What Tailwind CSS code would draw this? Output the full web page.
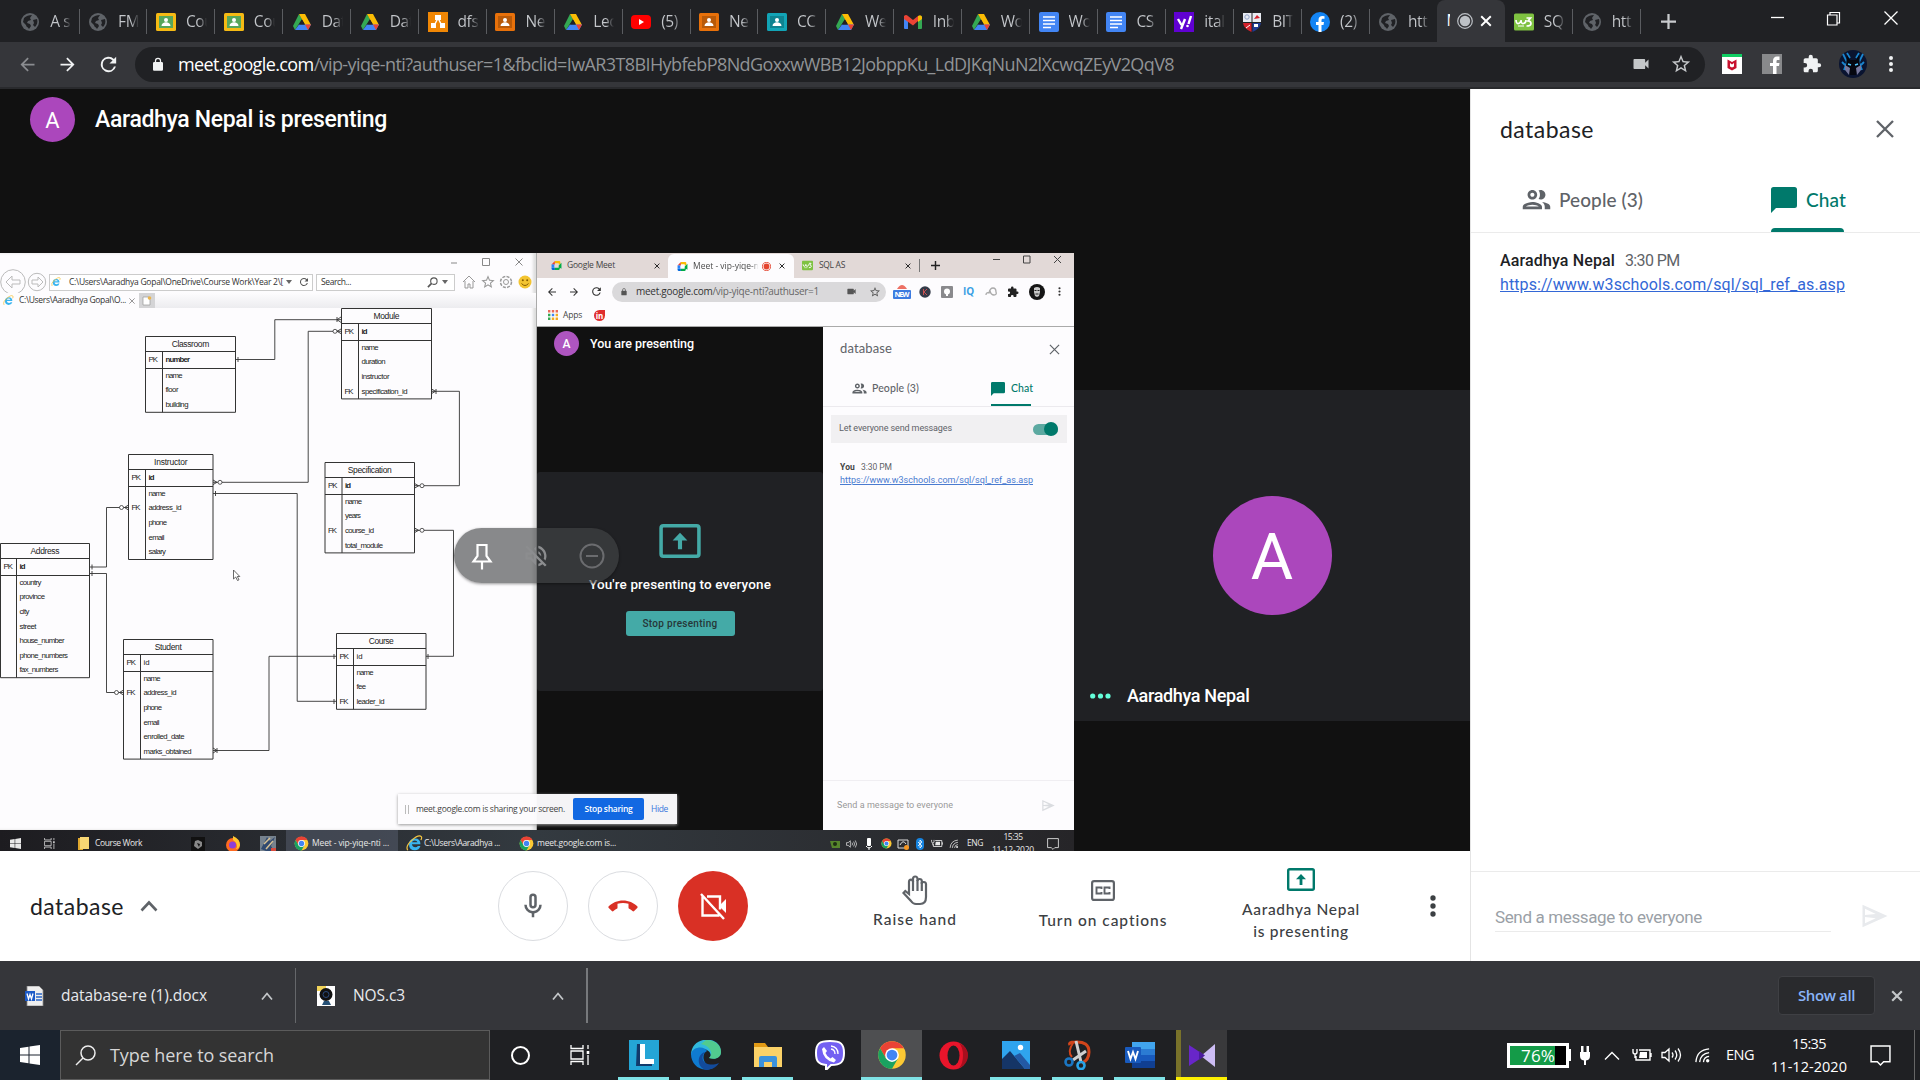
<!DOCTYPE html>
<html lang="en">
<head>
<meta charset="utf-8">
<title>Meet - vip-yiqe-nti</title>
<script src="https://cdn.jsdelivr.net/npm/@tailwindcss/browser@4"></script>
</head>
<body class="w-[1920px] h-[1080px] overflow-hidden bg-[#111] font-['Open_Sans',sans-serif] whitespace-nowrap flex flex-col">

<svg class="hidden">
  <symbol id="globe" viewBox="0 0 20 20"><circle cx="10" cy="10" r="9" fill="#5f6368"/><path d="M4 6c2-2 5-3 8-3l-2 3 1 2-3 1-1 2 3 1 1 2-2 3c-1-2-3-2-3-4L3 10zM13 8l4-1c1 3 0 6-2 8l-2-2 1-2z" fill="#202124"/></symbol>
  <symbol id="drive" viewBox="0 0 20 20"><path d="M7 2l3 5-7 11-2-4z" fill="#34a853"/><path d="M7 2h6l6 11h-6z" fill="#fbbc04"/><path d="M7 12.500H19l-3 5.500H3z" fill="#4285f4"/><path d="M13 12.500h6L16 18z" fill="#ea4335"/><path d="M10 7.500l3 5H7.200z" fill="#202124"/></symbol>
  <symbol id="classroom" viewBox="0 0 20 20"><rect y="1" width="20" height="18" rx="1.500" fill="currentColor"/><rect x="3" y="4" width="14" height="12" fill="#000" fill-opacity=".2"/><circle cx="10" cy="8" r="2" fill="#fff"/><path d="M5.500 14c0-5 9-5 9 0z" fill="#fff"/></symbol>
  <symbol id="classgreen" viewBox="0 0 20 20"><rect y="1" width="20" height="18" rx="1.500" fill="#f5ba14"/><rect x="3" y="4" width="14" height="12" fill="#57a65b"/><circle cx="10" cy="8" r="2" fill="#fff"/><path d="M5.500 14c0-5 9-5 9 0z" fill="#fff"/></symbol>
  <symbol id="flow" viewBox="0 0 20 20"><rect width="20" height="20" fill="#f08705"/><path d="M10 6L6 14M10 6l4 8" stroke="#fff" stroke-width="1.500"/><path d="M7 3h6v5H7zM3 11h5v5H3zM12 11h5v5h-5z" fill="#fff"/></symbol>
  <symbol id="yt" viewBox="0 0 20 20"><rect y="3" width="20" height="14" rx="4" fill="#f00"/><path d="M8 7l5 3-5 3z" fill="#fff"/></symbol>
  <symbol id="gmail" viewBox="0 0 20 20"><path d="M1 4h4v13H2q-1 0-1-1z" fill="#4285f4"/><path d="M15 4h4v12q0 1-1 1h-3z" fill="#34a853"/><path d="M1 4q2-2 4 0l5 4 5-4v5l-5 4.500L1 7z" fill="#ea4335"/><path d="M15 4q3-2 4 1v2l-4 3z" fill="#fbbc04"/></symbol>
  <symbol id="docs" viewBox="0 0 20 20"><rect width="20" height="20" rx="2" fill="#4285f4"/><path d="M4 5h12M4 8.500h12M4 12h12M4 15.500h8" stroke="#fff" stroke-width="1.700"/></symbol>
  <symbol id="yahoo" viewBox="0 0 20 20"><rect width="20" height="20" fill="#6001d2"/><path d="M4 7l3.500 6M11 7L7 17M14.500 12L17 4" stroke="#fff" stroke-width="2.400"/><circle cx="13.500" cy="14" r="1.300" fill="#fff"/></symbol>
  <symbol id="shield" viewBox="0 0 20 20"><path d="M1 1h8.500v9H1z" fill="#e8ebf2"/><path d="M10.500 1H19v9h-8.500z" fill="#e8ebf2"/><path d="M1 11h8.500v9Q2 17 1 11z" fill="#d4202a"/><path d="M10.500 11H19q-1 6-8.500 9z" fill="#1f3a93"/><circle cx="5" cy="5" r="2.200" fill="none" stroke="#8fa0c8"/><path d="M12 7l3-4 3 3z" fill="#d4202a"/><path d="M4 16l4-3" stroke="#fff"/><path d="M12 12h4v3h-4z" fill="#fff"/></symbol>
  <symbol id="fb" viewBox="0 0 20 20"><circle cx="10" cy="10" r="10" fill="#1384f4"/><path d="M8.500 20v-7H6v-3h2.500V8c0-2.700 1.500-4 4-4l2 .2v2.500H13c-1.200 0-1.500.6-1.500 1.500V10H14l-.5 3h-2v7z" fill="#fff"/></symbol>
  <symbol id="w3" viewBox="0 0 20 20"><rect y="1.500" width="20" height="17" rx="1.500" fill="#7fc241"/><path d="M2 8q.3 4 2.500 3.500T7 8q0 4 2.500 3.500T12 8" fill="none" stroke="#fff" stroke-width="1.700"/><path d="M12.500 6h4l-2.500 3q3 0 3 2.500T12.500 14" fill="none" stroke="#fff" stroke-width="1.700"/><path d="M4 14h6" stroke="#fff"/></symbol>
  <symbol id="chrome" viewBox="0 0 24 24"><circle cx="12" cy="12" r="11" fill="#fcc934"/><path d="M12 6.500h9.530a11 11 0 0 0-19.060 0l4.770 8.250z" fill="#ea4335"/><path d="M2.470 6.500A11 11 0 0 0 12 23l4.760-8.250H7.240z" fill="#1aa260"/><circle cx="12" cy="12" r="5.500" fill="#fff"/><circle cx="12" cy="12" r="4.300" fill="#4285f4"/></symbol>
  <symbol id="meet" viewBox="0 0 20 20"><path d="M1 8l6-6v6z" fill="#ea4335"/><path d="M7 2h8q2 0 2 2v4h-3V6H7z" fill="#fbbc04"/><path d="M1 8h5v6H1z" fill="#2684fc"/><path d="M1 14h6v4H3q-2 0-2-2z" fill="#0066da"/><path d="M7 14h7v-4l5-5v11l-3-2v2q0 2-2 2H7z" fill="#00ac47"/></symbol>
  <symbol id="ie" viewBox="0 0 20 20"><path d="M17 11H7q.5 3.500 4 3.500 2 0 3-1.500h3q-1.500 5-6.500 5-7 0-7-7.500Q4 4 10.500 4 17 4 17 11zM7 8.500h6.500Q13 6.500 10.300 6.500T7 8.500z" fill="#39b4ef"/><path d="M2 18Q-1 13 7 6T18 2q1 1-.5 4" fill="none" stroke="#f4c542" stroke-width="1.400"/></symbol>
  <symbol id="puzzle" viewBox="0 0 24 24"><path d="M20.500 11H19V7a2 2 0 0 0-2-2h-4V3.500a2.500 2.500 0 0 0-5 0V5H4a2 2 0 0 0-2 2v3.800h1.500a2.700 2.700 0 0 1 0 5.400H2V20c0 1.100.9 2 2 2h3.800v-1.500a2.700 2.700 0 0 1 5.400 0V22H17a2 2 0 0 0 2-2v-4h1.500a2.500 2.500 0 0 0 0-5z" fill="currentColor"/></symbol>
  <symbol id="people" viewBox="0 0 24 24"><path fill="currentColor" d="M9 13.750c-2.340 0-7 1.170-7 3.500V19h14v-1.750c0-2.330-4.660-3.500-7-3.500zM4.340 17c.84-.58 2.870-1.250 4.660-1.250s3.820.67 4.660 1.250H4.340zM9 12c1.930 0 3.500-1.570 3.500-3.500S10.930 5 9 5 5.500 6.570 5.500 8.500 7.070 12 9 12zm0-5c.83 0 1.500.67 1.500 1.500S9.830 10 9 10s-1.500-.67-1.500-1.500S8.170 7 9 7zm7.040 6.810c1.160.84 1.960 1.960 1.960 3.440V19h4v-1.750c0-2.020-3.500-3.170-5.960-3.440zM15 12c1.930 0 3.500-1.570 3.500-3.500S16.930 5 15 5c-.54 0-1.040.13-1.500.35.630.89 1 1.980 1 3.150s-.37 2.260-1 3.150c.46.22.96.35 1.500.35z"/></symbol>
  <symbol id="chat" viewBox="0 0 26 26"><path d="M2.500 0h21Q26 0 26 2.500v16Q26 21 23.500 21H5l-5 5V2.500Q0 0 2.500 0z" fill="currentColor"/></symbol>
  <symbol id="x" viewBox="0 0 20 20"><path d="M2 2l16 16M18 2L2 18" fill="none" stroke="currentColor" stroke-width="3.200"/></symbol>
  <symbol id="cam" viewBox="0 0 24 24"><path fill="currentColor" d="M17 10.500V7a1 1 0 0 0-1-1H4a1 1 0 0 0-1 1v10c0 .55.450 1 1 1h12a1 1 0 0 0 1-1v-3.500l4 4v-11z"/></symbol>
  <symbol id="star" viewBox="0 0 24 24"><path fill="currentColor" d="M22 9.240l-7.190-.62L12 2 9.190 8.630 2 9.240l5.460 4.730L5.820 21 12 17.270 18.180 21l-1.630-7.030zM12 15.400l-3.760 2.270 1-4.280-3.320-2.880 4.380-.38L12 6.100l1.710 4.040 4.380.38-3.320 2.880 1 4.280z"/></symbol>
  <symbol id="lock" viewBox="0 0 24 24"><path fill="currentColor" d="M18 8h-1V6A5 5 0 0 0 7 6v2H6a2 2 0 0 0-2 2v10c0 1.100.9 2 2 2h12a2 2 0 0 0 2-2V10a2 2 0 0 0-2-2zM9 8V6a3 3 0 0 1 6 0v2z"/></symbol>
  <symbol id="back" viewBox="0 0 24 24"><path fill="currentColor" d="M20 11H7.830l5.590-5.590L12 4l-8 8 8 8 1.410-1.410L7.830 13H20z"/></symbol>
  <symbol id="fwd" viewBox="0 0 24 24"><path fill="currentColor" d="M12 4l-1.410 1.410L16.170 11H4v2h12.170l-5.580 5.590L12 20l8-8z"/></symbol>
  <symbol id="reload" viewBox="0 0 24 24"><path fill="currentColor" d="M17.650 6.350A8 8 0 1 0 19.730 14h-2.080A6 6 0 1 1 12 6c1.660 0 3.140.69 4.220 1.780L13 11h7V4z"/></symbol>
  <symbol id="dots" viewBox="0 0 24 24"><path fill="currentColor" d="M12 8a2 2 0 1 0 0-4 2 2 0 0 0 0 4zm0 2a2 2 0 1 0 0 4 2 2 0 0 0 0-4zm0 6a2 2 0 1 0 0 4 2 2 0 0 0 0-4z"/></symbol>
  <symbol id="present" viewBox="0 0 28 23"><rect x="1.200" y="1.200" width="25.600" height="20.600" rx="1.500" fill="none" stroke="currentColor" stroke-width="2.400"/><path d="M14 6l5 5.200h-3.600V17h-2.800v-5.800H9z" fill="currentColor"/></symbol>
  <symbol id="send" viewBox="0 0 24 24"><path fill="currentColor" d="M2 3v18l20-9zm2 3.110L12.600 10.300 4 11.200zM4 12.800l8.600.9L4 17.890z"/></symbol>
  <symbol id="win" viewBox="0 0 20 20"><path fill="currentColor" d="M0 3l8.500-1.200v7.700H0zM9.500 1.600L20 0v9.500H9.500zM0 10.500h8.500v7.700L0 17zM9.500 10.500H20V20L9.500 18.400z"/></symbol>
  <symbol id="taskview" viewBox="0 0 20 20"><path d="M1 0v3.500h12V0M1 20v-3.500h12V20M1 6h12v8H1zM18 0v4M18 10v10" fill="none" stroke="currentColor" stroke-width="1.300"/><path d="M16.700 6h2.600v3h-2.600z" fill="currentColor"/></symbol>
  <symbol id="speaker" viewBox="0 0 22 18"><path d="M1 6.500h3L8 3v12l-4-3.500H1zM11 6.500q2 2.500 0 5M14 4.500q3.500 4.500 0 9M17 2.500q5 6.500 0 13" fill="none" stroke="currentColor" stroke-width="1.300"/></symbol>
  <symbol id="wifi" viewBox="0 0 18 18"><path d="M2 16Q3 3 16 2M6 16q1-9 10-10M10 16q.5-5.500 6-6" fill="none" stroke="currentColor" stroke-width="1.400"/><circle cx="14.500" cy="14.500" r="1.800" fill="currentColor"/></symbol>
  <symbol id="batt" viewBox="0 0 20 14"><path d="M7 2h11v10H4V8M19 5v4M1 1v3q0 2 2 2t2-2V1M3 6v4" fill="none" stroke="currentColor" stroke-width="1.400"/><path d="M8 4h7v6H7z" fill="currentColor"/></symbol>
  <symbol id="note" viewBox="0 0 20 20"><path d="M1 1h18v15h-6l-3 3-3-3H1z" fill="none" stroke="currentColor" stroke-width="1.400"/></symbol>
</svg>

<!-- Tab strip -->
<header class="h-[42px] shrink-0 bg-[#202124] flex text-[15.500px] text-[#c4c7cb]">
  <div id="tabs" class="flex pl-[11.700px] w-[1641.500px] shrink-0"></div>
  <svg class="w-[15px] h-[15px] mt-[14px] ml-[19px] text-[#c8cacd]" viewBox="0 0 16 16"><path d="M8 0v16M0 8h16" stroke="currentColor" stroke-width="2.400"/></svg>
  <div class="ml-[94px] flex pt-[11px] text-white">
    <svg class="w-[16px] h-[14px]" viewBox="0 0 16 14"><path d="M1 6.500h13" stroke="currentColor" stroke-width="1.300"/></svg>
    <svg class="w-[15px] h-[15px] ml-[40px]" viewBox="0 0 15 15"><path d="M1.500 4h9.500v10H1.500zM4 4V1.500h9.500V12H11" fill="none" stroke="currentColor" stroke-width="1.200"/></svg>
    <svg class="w-[14px] h-[14px] ml-[43px]" viewBox="0 0 14 14"><path d="M.5.5l13 13M13.500.5l-13 13" stroke="currentColor" stroke-width="1.300"/></svg>
  </div>
</header>

<!-- Toolbar -->
<div class="h-[47px] shrink-0 bg-[#35363a] border-b-2 border-[#292a2d] flex items-center text-[#f1f3f4] pb-px">
  <svg class="size-[21px] ml-[17px] text-[#8a8c90] shrink-0"><use href="#back"/></svg>
  <svg class="size-[21px] ml-[19px] shrink-0"><use href="#fwd"/></svg>
  <svg class="size-[23px] ml-[19px] mr-[15px] shrink-0"><use href="#reload"/></svg>
  <div class="w-[1570px] h-[35px] rounded-full bg-[#202124] flex items-center shrink-0">
    <svg class="w-[16px] h-[15px] ml-[15px] mr-[12px] shrink-0"><use href="#lock"/></svg>
    <span class="w-[1454px] text-[18px] text-[#909396] shrink-0"><span data-w="996"><span class="text-white">meet.google.com</span>/vip-yiqe-nti?authuser=1&amp;fbclid=IwAR3T8BIHybfebP8NdGoxxwWBB12JobppKu_LdDJKqNuN2lXcwqZEyV2QqV8</span></span>
    <svg class="size-[20px] ml-[-1px] text-[#c4c7c9] shrink-0"><use href="#cam"/></svg>
    <svg class="size-[22px] ml-[19px] text-[#c4c7c9] shrink-0"><use href="#star"/></svg>
  </div>
  <svg class="size-[20px] ml-[17px] shrink-0" viewBox="0 0 20 20"><path fill="#fff" d="M0 0h20v20H0z"/><path fill="#0fce62" d="M0 0h20v3H0z"/><path d="M5.500 5.500L10 8l4.500-2.500V14L10 16.500 5.500 14z" fill="#c8102e"/><path d="M8 9l2 1.500L12 9v3.500l-2 1-2-1z" fill="#fff"/></svg>
  <svg class="size-[20px] ml-[20px] shrink-0" viewBox="0 0 20 20"><path fill="#88898b" d="M0 0h20v20H0z"/><path d="M11 20v-8H8V9h3V7c0-3 1.500-4.500 4-4.500h2.500V6H16c-1.500 0-1.500.5-1.500 1.500V9h3l-.5 3h-2.500v8z" fill="#fff"/></svg>
  <svg class="size-[20px] ml-[20px] shrink-0"><use href="#puzzle"/></svg>
  <svg class="size-[28px] ml-[17px] shrink-0" viewBox="0 0 28 28"><circle cx="14" cy="14" r="14" fill="#0a1430"/><path d="M4 4l4 8-3 8M24 4l-4 8 3 8M8 3l3 5M20 3l-3 5M3 12l3 3M25 12l-3 3" stroke="#1a86d0" stroke-width="1.800" fill="none"/><path d="M8 5l3 5h6l3-5 1 11-4 9h-6L7 16z" fill="#05070f"/><path d="M6 15l5 3-1 7-4-5zM22 15l-5 3 1 7 4-5z" fill="#77789c"/><path d="M9 14l3 1M19 14l-3 1" stroke="#4cc6ff" stroke-width="1.500"/></svg>
  <svg class="size-[24px] ml-[12px] shrink-0"><use href="#dots"/></svg>
</div>

<!-- Page -->
<div class="h-[872px] shrink-0 flex">
  <main class="w-[1470px] shrink-0 flex flex-col font-[Roboto,sans-serif] bg-[#111]">
    <div class="h-[164px] shrink-0 flex pl-[30px] pt-[8px] text-white">
      <div class="size-[45px] rounded-full bg-[#ab47bc] flex items-center justify-center text-[22px] pt-[2px]">A</div>
      <span class="ml-[20px] mt-[7px] text-[23px] leading-[32px] font-medium"><span data-w="292">Aaradhya Nepal is presenting</span></span>
    </div>
    <div class="h-[598px] shrink-0 flex">
      <!-- Shared screen -->
      <section class="relative w-[1074px] h-[598px] shrink-0 flex flex-col overflow-hidden bg-[#fdfcfe]">
        <div class="h-[577px] shrink-0 flex">
          <!-- Browser window with the ER diagram -->
          <div class="w-[537px] shrink-0 border-r border-[#aaa] font-['Open_Sans',sans-serif] text-[8.500px] text-[#333] flex flex-col shadow-[inset_-3px_0_3px_#ddd]">
            <div class="h-[18px] flex items-center pl-[451px] text-[#888]">
              <svg class="w-[6px] h-[8px]" viewBox="0 0 6 8"><path d="M0 5h6" stroke="currentColor"/></svg>
              <svg class="size-[8px] ml-[25px]" viewBox="0 0 8 8"><path d="M.5.5h7v7h-7z" fill="none" stroke="currentColor"/></svg>
              <svg class="size-[8px] ml-[25px]" viewBox="0 0 8 8"><path d="M.5.5l7 7M7.500.5l-7 7" stroke="currentColor" fill="none"/></svg>
            </div>
            <div class="h-[22px] flex items-center text-[#999]">
              <svg class="w-[49px] h-[26px] shrink-0" viewBox="0 0 49 26"><g fill="none" stroke="#bbb"><circle cx="13" cy="13" r="12.300"/><circle cx="37" cy="13" r="8.700"/><path d="M6 13l6-6v4h8v4h-8v4zM43 13l-5-5v3h-6v4h6v3z"/></g></svg>
              <div class="w-[264px] h-[17px] border border-[#ccc] bg-white flex items-center shrink-0">
                <svg class="size-[10px] ml-[1px]"><use href="#ie"/></svg>
                <span class="ml-[8px] w-[216px] text-[#333]"><span data-w="214">C:\Users\Aaradhya Gopal\OneDrive\Course Work\Year 2\[</span></span>
                <svg class="w-[6px] h-[4px] ml-px" viewBox="0 0 6 4"><path d="M0 0h6L3 4z" fill="#666"/></svg>
                <svg class="size-[12px] ml-[6px] text-[#555]"><use href="#reload"/></svg>
              </div>
              <div class="ml-[3px] w-[139px] h-[17px] border border-[#ccc] bg-white flex items-center text-[#333] shrink-0">
                <span class="ml-[4px] w-[106px]"><span data-w="30">Search...</span></span>
                <svg class="size-[11px]" viewBox="0 0 12 12"><circle cx="7.500" cy="4.500" r="3.500" fill="none" stroke="#555" stroke-width="1.200"/><path d="M5 7L1 11" stroke="#555" stroke-width="1.800"/></svg>
                <svg class="w-[6px] h-[4px] ml-[4px]" viewBox="0 0 6 4"><path d="M0 0h6L3 4z" fill="#666"/></svg>
              </div>
              <svg class="size-[14px] ml-[7px]" viewBox="0 0 14 14"><path d="M1 7l6-6 6 6M3 6v7h3V9h2v4h3V6" fill="none" stroke="currentColor"/></svg>
              <svg class="size-[16px] ml-[4px]"><use href="#star"/></svg>
              <svg class="size-[14px] ml-[3px]" viewBox="0 0 14 14"><circle cx="7" cy="7" r="5.500" fill="none" stroke="currentColor" stroke-width="1.500" stroke-dasharray="3 1.300"/><circle cx="7" cy="7" r="2.500" fill="none" stroke="currentColor"/></svg>
              <svg class="size-[14px] ml-[5px]" viewBox="0 0 14 14"><circle cx="7" cy="7" r="6.500" fill="#f3c431"/><circle cx="4.800" cy="5.300" r="1" fill="#865d00"/><circle cx="9.200" cy="5.300" r="1" fill="#865d00"/><path d="M3.500 8.500q3.500 4 7 0" fill="none" stroke="#865d00"/></svg>
            </div>
            <div class="h-[15px] flex items-center bg-linear-to-b from-[#fdfcfe] to-[#ececef]">
              <div class="w-[139px] h-full bg-[#fdfcfe] flex items-center">
                <svg class="size-[11px] ml-[3px]"><use href="#ie"/></svg>
                <span class="ml-[5px] w-[110px]"><span data-w="107">C:\Users\Aaradhya Gopal\O...</span></span>
                <svg class="size-[6px] text-[#777]" viewBox="0 0 8 8"><path d="M.5.5l7 7M7.500.5l-7 7" stroke="currentColor"/></svg>
              </div>
              <div class="w-[16px] h-full bg-[#d4d4d6] flex items-center justify-center"><svg class="size-[10px]" viewBox="0 0 10 10"><path d="M1 1h6l1 3v5H1z" fill="#fff" stroke="#999" stroke-width=".7"/><circle cx="7.500" cy="2" r="1.800" fill="#eab54e"/></svg></div>
            </div>
            <svg id="erd" class="w-[536px] h-[522px]" viewBox="0 308 536 522" font-family="Liberation Sans, sans-serif" font-size="7.800" fill="#222"></svg>
          </div>

          <!-- Browser window with the call -->
          <div class="w-[537px] shrink-0 flex flex-col">
            <div class="h-[25px] shrink-0 bg-[#e2d9d7] flex items-center font-['Open_Sans',sans-serif] text-[8.500px] text-[#444]">
              <div class="w-[131px] flex items-center pl-[14px] shrink-0">
                <svg class="size-[11px]"><use href="#meet"/></svg>
                <span class="ml-[5px] w-[87px]"><span data-w="48">Google Meet</span></span>
                <svg class="size-[6px] text-[#222]"><use href="#x"/></svg>
              </div>
              <div class="w-[126px] h-[24px] mt-px rounded-t-[6px] bg-[#fdfcfe] flex items-center pl-[9px] shrink-0">
                <svg class="size-[11px] shrink-0"><use href="#meet"/></svg>
                <span class="ml-[5px] w-[69px] bg-linear-to-r from-[#444] from-85% to-transparent to-95% bg-clip-text text-transparent"><span data-w="66">Meet - vip-yiqe-n</span></span>
                <svg class="size-[9px] shrink-0" viewBox="0 0 10 10"><circle cx="5" cy="5" r="4.500" fill="#fff" stroke="#e4442f"/><circle cx="5" cy="5" r="3.200" fill="#e4442f"/></svg>
                <svg class="size-[6px] ml-[8px] text-[#222]"><use href="#x"/></svg>
              </div>
              <svg class="size-[11px] ml-[8px] shrink-0"><use href="#w3"/></svg>
              <span class="ml-[6px] w-[86px] shrink-0"><span data-w="26">SQL AS</span></span>
              <svg class="size-[6px] text-[#222]"><use href="#x"/></svg>
              <div class="w-px h-[13px] ml-[8px] bg-[#777]"></div>
              <svg class="size-[9px] ml-[11px]" viewBox="0 0 10 10"><path d="M5 0v10M0 5h10" stroke="#222" stroke-width="1.600"/></svg>
              <svg class="w-[77px] h-[9px] ml-[52px] mb-[12px]" viewBox="0 0 77 9"><path d="M1 4.500h7M31.500 1h6.500v7h-6.500zM62 1l7 7M69 1l-7 7" fill="none" stroke="#444"/></svg>
            </div>
            <div class="h-[26px] mt-0 shrink-0 flex items-center pl-[9px] pt-px text-[#333] font-['Open_Sans',sans-serif] text-[10px]">
              <svg class="size-[12px] shrink-0"><use href="#back"/></svg>
              <svg class="size-[12px] ml-[10px] shrink-0"><use href="#fwd"/></svg>
              <svg class="size-[13px] ml-[10px] shrink-0"><use href="#reload"/></svg>
              <div class="ml-[9px] w-[274px] h-[20px] rounded-full bg-[#dad9db] flex items-center shrink-0">
                <svg class="size-[8px] ml-[8px] text-[#555]"><use href="#lock"/></svg>
                <span class="ml-[8px] w-[210px] text-[#666]"><span data-w="183"><span class="text-[#333]">meet.google.com</span>/vip-yiqe-nti?authuser=1</span></span>
                <svg class="size-[11px] text-[#555]"><use href="#cam"/></svg>
                <svg class="size-[12px] ml-[12px] text-[#555]"><use href="#star"/></svg>
              </div>
              <svg class="w-[20px] h-[17px] ml-[6px] shrink-0" viewBox="0 0 20 17"><path d="M5 6q5-8 10 0z" fill="#ed7064"/><rect x="1" y="7" width="18" height="9" rx="1" fill="#3c7be0"/><text x="2.500" y="14.300" font-size="7.500" font-weight="700" textLength="15" fill="#fff">NEW</text></svg>
              <svg class="size-[12px] ml-[7px] shrink-0" viewBox="0 0 12 12"><circle cx="6" cy="6" r="5.700" fill="#343a48"/><path d="M4.500 3v6M8 3L5 6l3 3" stroke="#c75050" fill="none"/></svg>
              <svg class="size-[12px] ml-[10px] shrink-0" viewBox="0 0 12 12"><rect width="12" height="12" rx="1" fill="#8a8a8d"/><circle cx="6" cy="5.500" r="3" fill="#fff"/><path d="M5 8h2v2H5z" fill="#fff"/></svg>
              <span class="ml-[10px] w-[11px] text-[#3aa0e4] font-bold text-[10px] shrink-0"><span data-w="11">IQ</span></span>
              <svg class="w-[12px] h-[10px] ml-[11px] shrink-0" viewBox="0 0 12 10"><path d="M1 8q0-3 3-2 1-5 4-5t3 4q1 3-2 3-3 0-4-4" fill="none" stroke="#aaa" stroke-width="1.300"/></svg>
              <svg class="size-[12px] ml-[10px] text-[#222] shrink-0"><use href="#puzzle"/></svg>
              <svg class="size-[16px] ml-[10px] shrink-0" viewBox="0 0 16 16"><circle cx="8" cy="8" r="8" fill="#151515"/><path d="M5 4q3-2 6 0v4l-1 4-2 1-2-1-1-4z" fill="#c9c9c9"/><path d="M5.500 6.500h2M8.500 6.500h2M6.500 10h3" stroke="#222"/></svg>
              <svg class="size-[13px] ml-[8px] shrink-0"><use href="#dots"/></svg>
            </div>
            <div class="h-[23px] shrink-0 flex items-center pl-[11px] border-b border-[#aaa] font-['Open_Sans',sans-serif] text-[8.500px] text-[#444]">
              <svg class="size-[10px]" viewBox="0 0 10 10"><path d="M0 0h2.400v2.400H0zM3.800 0h2.400v2.400H3.800zM7.600 0H10v2.400H7.600z" fill="#ea6a5b"/><path d="M0 3.800h2.400v2.400H0zM0 7.600h2.400V10H0z" fill="#34a853"/><path d="M3.800 3.800h2.400v2.400H3.800z" fill="#4285f4"/><path d="M7.600 3.800H10v2.400H7.600zM3.800 7.600h2.400V10H3.800zM7.600 7.600H10V10H7.600z" fill="#f2ad25"/></svg>
              <span class="ml-[5px] w-[31px]"><span data-w="19">Apps</span></span>
              <div class="size-[11px] rounded-full rounded-tr-none bg-[#df2d2d] text-white font-bold text-[8px] leading-[11px] text-center">in</div>
            </div>
            <div class="h-[503px] flex">
              <div class="w-[286px] shrink-0 bg-[#111] text-white flex flex-col">
                <div class="h-[145px] flex pl-[17px] pt-[4px]">
                  <div class="size-[25px] rounded-full bg-[#ae55c0] text-[12px] font-medium flex items-center justify-center pt-px">A</div>
                  <span class="ml-[11px] text-[12.500px] leading-[25px] font-medium"><span data-w="104">You are presenting</span></span>
                </div>
                <div class="h-[219px] rounded-[3px] bg-[#202124] flex flex-col items-center pt-[52px]">
                  <svg class="w-[42px] h-[34px] text-[#44aaa7]"><use href="#present"/></svg>
                  <span class="mt-[17px] text-[13.500px] leading-[18px] font-medium"><span data-w="182">You're presenting to everyone</span></span>
                  <div class="mt-[18px] w-[109px] h-[25px] rounded-[3px] bg-[#44aaa7] text-[#263638] text-[10px] leading-[25px] font-medium text-center"><span data-w="75">Stop presenting</span></div>
                </div>
              </div>
              <div class="w-[251px] bg-[#fdfcfe] text-[#5f6368] flex flex-col text-[9px]">
                <div class="h-[44px] flex items-center justify-between pl-[17px] pr-[14px] font-[Lato,sans-serif] text-[13px]"><span data-w="52">database</span><svg class="size-[11px]" viewBox="0 0 12 12"><path d="M1 1l10 10M11 1L1 11" stroke="currentColor" stroke-width="1.300"/></svg></div>
                <div class="h-[36px] border-b border-[#eceaee] flex font-[Lato,sans-serif] text-[10.500px] font-medium">
                  <svg class="size-[17px] ml-[28px] mt-[9px] shrink-0"><use href="#people"/></svg>
                  <span class="ml-[4px] mt-[10px] w-[119px] shrink-0"><span data-w="47">People (3)</span></span>
                  <div class="w-[43px] flex flex-col justify-between pt-[10px] text-[#00796b] shrink-0">
                    <div class="flex"><svg class="size-[14px] mt-px shrink-0"><use href="#chat"/></svg><span class="ml-[6px]"><span data-w="22">Chat</span></span></div>
                    <div class="h-[2px] w-[40px] bg-[#00796b]"></div>
                  </div>
                </div>
                <div class="mt-[8px] ml-[8px] w-[236px] h-[28px] bg-[#f1f0f2] flex items-center pl-[8px]">
                  <span class="w-[194px]"><span data-w="113">Let everyone send messages</span></span>
                  <div class="w-[25px] h-[11px] rounded-full bg-[#5ca9a1] flex justify-end items-center"><div class="size-[14px] rounded-full bg-[#00796b] shrink-0"></div></div>
                </div>
                <div class="mt-[18px] pl-[17px] flex gap-[6px] leading-[13px] text-[8.500px]"><b class="text-[#444]" data-w="15">You</b><span data-w="31">3:30 PM</span></div>
                <div class="pl-[17px] leading-[13px] text-[#4a7bd0] underline"><span data-w="193">https://www.w3schools.com/sql/sql_ref_as.asp</span></div>
                <div class="mt-auto h-[50px] border-t border-[#f0eef2] flex items-center pl-[14px] text-[#999]"><span class="w-[204px]"><span data-w="116">Send a message to everyone</span></span><svg class="size-[15px] text-[#dadce0]"><use href="#send"/></svg></div>
              </div>
            </div>
          </div>
        </div>
        <!-- Taskbar inside the shared screen -->
        <div class="h-[21px] shrink-0 overflow-hidden bg-linear-to-r from-[#1d1c20] via-[#333a40] to-[#262528] flex items-start font-['Open_Sans',sans-serif] text-[8.500px] text-[#e8e8e8] pl-[10px]">
          <div class="flex items-center h-[27px] shrink-0">
            <svg class="size-[11px]"><use href="#win"/></svg>
            <svg class="size-[11px] ml-[23px]"><use href="#taskview"/></svg>
            <svg class="w-[11px] h-[13px] ml-[23px]" viewBox="0 0 11 13"><path d="M0 1h5v12H0z" fill="#e0a82e"/><path d="M2 0h9v12H2z" fill="#f7d774"/></svg>
            <span class="ml-[6px] w-[96px]"><span data-w="47">Course Work</span></span>
            <svg class="size-[14px]" viewBox="0 0 14 14"><path d="M0 0h14v14H0z" fill="#111"/><path d="M4 4l3-1 4 2v4l-4 3-4-3z" fill="#888"/><path d="M6 6l3 1-1 3z" fill="#111"/></svg>
            <svg class="size-[16px] ml-[20px]" viewBox="0 0 16 16"><circle cx="8" cy="9" r="7" fill="#ff6a1f"/><path d="M8 0q7 3 7 9-1 4-4 4 3-5-3-9z" fill="#ffc62e"/><circle cx="7.500" cy="9" r="3.500" fill="#8d3fd8"/></svg>
            <svg class="size-[16px] ml-[19px]" viewBox="0 0 16 16"><path d="M0 0h16v16H0z" fill="#76828e"/><path d="M1 13L7 1l3 4 5-4-4 9 3 5H6z" fill="#314a70"/><path d="M4 8l6-6M6 13l7-8" stroke="#d7c193" stroke-width="1.500"/><path d="M11 12h5v4h-5z" fill="#d94b3d"/></svg>
          </div>
          <div class="ml-[10px] w-[112px] h-[27px] bg-[#515967]/60 flex items-center pl-[8px] shrink-0">
            <svg class="size-[15px] shrink-0"><use href="#chrome"/></svg><span class="ml-[3px]"><span data-w="77">Meet - vip-yiqe-nti ...</span></span>
          </div>
          <div class="flex items-center h-[27px] shrink-0">
            <svg class="size-[17px] ml-[8px]"><use href="#ie"/></svg><span class="ml-[1px] w-[95px]"><span data-w="76">C:\Users\Aaradhya ...</span></span>
            <svg class="size-[15px]"><use href="#chrome"/></svg><span class="ml-[3px] w-[293px]"><span data-w="79">meet.google.com is...</span></span>
            <svg class="w-[10px] h-[8px]" viewBox="0 0 10 8"><path d="M0 1h10v7H2z" fill="#56852c"/><circle cx="5" cy="4" r="2" fill="#1d2f12"/></svg>
            <svg class="w-[12px] h-[10px] ml-[6px]"><use href="#speaker"/></svg>
            <svg class="w-[8px] h-[12px] ml-[7px]" viewBox="0 0 8 12"><rect x="2" width="4" height="8" rx="1" fill="#fff"/><path d="M1 8q3 4 6 0M4 9v3" stroke="#fff" fill="none"/></svg>
            <svg class="size-[11px] ml-[8px]"><use href="#chrome"/></svg>
            <svg class="size-[12px] ml-[5px]" viewBox="0 0 12 12"><path d="M1 2h10v8H1zM3 7q3-6 6-1" fill="none" stroke="#ddd"/><circle cx="9.500" cy="9.500" r="2.500" fill="#f59723"/></svg>
            <svg class="w-[8px] h-[12px] ml-[7px]" viewBox="0 0 8 12"><rect width="8" height="12" rx="4" fill="#1684e0"/><path d="M2 4l4 4-2 2V2l2 2-4 4" fill="none" stroke="#fff" stroke-width=".8"/></svg>
            <svg class="w-[12px] h-[9px] ml-[7px]"><use href="#batt"/></svg>
            <svg class="size-[10px] ml-[6px]"><use href="#wifi"/></svg>
            <span class="ml-[8px] w-[25px]"><span data-w="16">ENG</span></span>
            <div class="w-[42px] leading-[12.500px] text-center self-start pt-px"><span data-w="19">15:35</span><br><span data-w="42">11-12-2020</span></div>
            <svg class="size-[12px] ml-[13px]"><use href="#note"/></svg>
          </div>
        </div>
        <!-- Sharing notice -->
        <div class="absolute left-[398px] top-[541px] w-[279px] h-[30px] bg-[#fdfcfe]/97 shadow-[0_1px_3px_#999] flex items-center font-['Open_Sans',sans-serif] text-[8.500px] text-[#444]">
          <div class="ml-[7px] w-[4px] h-[9px] border-x border-[#bbb]"></div>
          <span class="ml-[7px] w-[157px]"><span data-w="149">meet.google.com is sharing your screen.</span></span>
          <div class="w-[71px] h-[22px] rounded-[2px] bg-[#1268e2] text-white font-semibold leading-[22px] text-center"><span data-w="48">Stop sharing</span></div>
          <span class="ml-[7px] text-[#3a76dc]"><span data-w="17">Hide</span></span>
        </div>
        <!-- Hover controls -->
        <div class="absolute left-[454px] top-[275px] w-[165px] h-[55px] rounded-full bg-[#444548]/63 shadow-[0_1px_3px_#0006] flex items-center text-[#8c8d8f]">
          <svg class="size-[28px] ml-[14px]" viewBox="0 0 28 28"><path d="M9.500 3h9v11l4 5.500H5.500l4-5.500zM14 19.500v8" fill="none" stroke="#fff" stroke-width="2.200"/></svg>
          <svg class="size-[28px] ml-[26px]" viewBox="0 0 24 24"><path fill="currentColor" d="M4.340 2.930L2.930 4.340 7.290 8.700 7 9H3v6h4l5 5v-6.590l4.180 4.180c-.65.490-1.380.88-2.180 1.110v2.060a8.940 8.940 0 0 0 3.610-1.750l2.050 2.050 1.410-1.410zM10 15.170L7.830 13H5v-2h2.830l.88-.88L10 11.410zM19 12c0 .82-.15 1.610-.41 2.340l1.530 1.530A8.900 8.900 0 0 0 21 12c0-4.280-2.990-7.860-7-8.770v2.060c2.890.86 5 3.540 5 6.710zm-7-8l-1.880 1.880L12 7.760zm4.500 8A4.500 4.500 0 0 0 14 7.970v1.790l2.480 2.480z"/></svg>
          <svg class="size-[28px] ml-[28px] text-[#6b6c6f]" viewBox="0 0 28 28"><circle cx="14" cy="14" r="11.500" fill="none" stroke="currentColor" stroke-width="2"/><path d="M8 14h12" stroke="currentColor" stroke-width="2"/></svg>
        </div>
      </section>
      <!-- Participant tile -->
      <div class="w-[396px] h-[331px] mt-[137px] bg-[#202124] flex flex-col items-center text-white">
        <div class="mt-[106px] size-[119px] rounded-full bg-[#ab47bc] text-[65px] flex items-center justify-center pt-[4px]">A</div>
        <div class="self-start mt-[66px] pl-[16px] flex items-center text-[18px] leading-[28px]">
          <svg class="w-[21px] h-[6px]" viewBox="0 0 21 6"><g fill="#64ffda"><circle cx="2.700" cy="3" r="2.600"/><circle cx="10.500" cy="3" r="2.600"/><circle cx="18" cy="3" r="2.600"/></g></svg>
          <span class="ml-[16px] pt-px font-medium"><span data-w="122.500">Aaradhya Nepal</span></span>
        </div>
      </div>
    </div>
    <!-- Call controls -->
    <div class="h-[110px] shrink-0 bg-white flex items-center text-[#3c4043] font-[Lato,sans-serif]">
      <span class="ml-[30px] w-[110px] shrink-0 text-[23px] text-[#202124]"><span data-w="94">database</span></span>
      <svg class="w-[18px] h-[12px] mr-[340px] shrink-0" viewBox="0 0 18 12"><path d="M1.500 10.500L9 2.500l7.500 8" fill="none" stroke="#5f6368" stroke-width="2.600"/></svg>
      <div class="size-[70px] shrink-0 rounded-full border border-[#dadce0] flex items-center justify-center"><svg class="size-[30px]" viewBox="0 0 24 24"><path fill="#5f6368" d="M12 14a3 3 0 0 0 3-3V5a3 3 0 0 0-6 0v6a3 3 0 0 0 3 3zm-1-9a1 1 0 0 1 2 0v6a1 1 0 0 1-2 0zm6 6a5 5 0 0 1-10 0H5a7 7 0 0 0 6 6.920V21h2v-3.080A7 7 0 0 0 19 11z"/></svg></div>
      <div class="size-[70px] shrink-0 ml-[20px] rounded-full border border-[#dadce0] flex items-center justify-center"><svg class="size-[30px]" viewBox="0 0 24 24"><path fill="#d93025" d="M12 7.500c4.500 0 8.600 1.800 11.400 4.700.4.400.4 1 0 1.300l-2.500 2.500c-.4.400-1 .4-1.300 0-.8-.7-1.700-1.300-2.600-1.800-.3-.2-.6-.5-.6-.9v-3.100a15 15 0 0 0-8.800 0v3.100c0 .4-.2.800-.6.900-1 .5-1.900 1.100-2.600 1.800-.4.400-1 .4-1.300 0L.600 13.500a.9.900 0 0 1 0-1.300C3.400 9.300 7.500 7.500 12 7.500z"/></svg></div>
      <div class="size-[70px] shrink-0 ml-[20px] rounded-full bg-[#d93025] flex items-center justify-center"><svg class="size-[30px]" viewBox="0 0 30 30"><path d="M3 3l23 25M9 5.500h13v13M4.500 5v19.500h17" fill="none" stroke="#fff" stroke-width="2.400"/><path d="M22 14l6-6v14l-6-6z" fill="#fff"/></svg></div>
      <div class="ml-[115px] w-[104px] shrink-0 flex flex-col items-center text-[15.500px] font-medium pb-[5px]">
        <svg class="w-[28px] h-[31px]" viewBox="0 0 28 31"><path d="M8 19V7q0-2.300 2-2.300T12 7V4q0-2.500 2.200-2.500T16.500 4v2q0-2 2.100-2t2.200 2v3q0-2 2-2t2.200 2v13q0 7-6 7h-4q-3 0-5-3L2.500 18l1.800-2z" fill="#fff" stroke="#5f6368" stroke-width="2.200"/><path d="M12 6v10M16.500 5v11M20.800 7v9" stroke="#5f6368" stroke-width="2.200"/></svg>
        <span class="leading-[26px]"><span data-w="84">Raise hand</span></span>
      </div>
      <div class="ml-[59px] w-[154px] shrink-0 flex flex-col items-center text-[15.500px] font-medium pt-px">
        <svg class="w-[24px] h-[21px]" viewBox="0 0 24 21"><rect x="1.100" y="1.100" width="21.800" height="18.800" rx="2" fill="none" stroke="#5f6368" stroke-width="2.200"/><path d="M10.500 9V7.500h-5v6h5V12M18.500 9V7.500h-5v6h5V12" fill="none" stroke="#5f6368" stroke-width="1.900"/></svg>
        <span class="leading-[26px] mt-[6px]"><span data-w="129">Turn on captions</span></span>
      </div>
      <div class="ml-[41px] w-[160px] shrink-0 flex flex-col items-center text-[15.500px] font-medium leading-[22px] pb-[2px]">
        <svg class="w-[28px] h-[23px] text-[#00796b] mb-[7px]"><use href="#present"/></svg>
        <span data-w="118">Aaradhya Nepal</span><span data-w="96">is presenting</span>
      </div>
      <svg class="size-[32px] ml-[36px] shrink-0"><use href="#dots"/></svg>
    </div>
  </main>

  <!-- Chat panel -->
  <aside class="w-[450px] shrink-0 bg-white border-l border-[#e4e4e4] flex flex-col text-[#5f6368] font-[Roboto,sans-serif]">
    <div class="h-[80px] flex items-center justify-between pl-[29px] pr-[26px] font-[Lato,sans-serif] text-[23px] text-[#202124]"><span data-w="94">database</span><svg class="size-[18px] text-[#5f6368]" viewBox="0 0 18 18"><path d="M1 1l16 16M17 1L1 17" stroke="currentColor" stroke-width="2.300"/></svg></div>
    <div class="h-[64px] border-b border-[#ebebeb] flex font-[Lato,sans-serif] text-[19px] font-medium">
      <svg class="size-[33px] ml-[49px] mt-[14px] shrink-0"><use href="#people"/></svg>
      <span class="ml-[6px] mt-[17px] w-[212px] shrink-0"><span data-w="84">People (3)</span></span>
      <div class="w-[75px] flex flex-col justify-between pt-[17px] text-[#00796b] shrink-0">
        <div class="flex"><svg class="size-[26px] mt-px shrink-0"><use href="#chat"/></svg><span class="ml-[9px]"><span data-w="40">Chat</span></span></div>
        <div class="h-[4px] w-[73px] rounded-t bg-[#00796b]"></div>
      </div>
    </div>
    <div class="pt-[16px] pl-[29px] leading-[24px] text-[16px]">
      <div class="flex gap-[10px]"><span class="text-[#202124] font-medium" data-w="115">Aaradhya Nepal</span><span data-w="54.500">3:30 PM</span></div>
      <div class="text-[#3367d6] underline"><span data-w="345">https://www.w3schools.com/sql/sql_ref_as.asp</span></div>
    </div>
    <div class="mt-auto h-[90px] border-t border-[#ebebeb] flex pl-[24px] text-[#9aa0a6] text-[17px]">
      <div class="w-[336px] shrink-0 h-[60px] border-b border-[#ebebeb] pt-[33px]"><span data-w="207">Send a message to everyone</span></div>
      <svg class="size-[30px] ml-[29px] mt-[29px] text-[#e8eaed] shrink-0"><use href="#send"/></svg>
    </div>
  </aside>
</div>

<!-- Downloads -->
<div class="h-[69px] shrink-0 bg-[#35363a] flex items-center text-[15.500px] text-[#e8eaed]">
  <svg class="w-[19px] h-[20px] ml-[25px]" viewBox="0 0 19 20"><path d="M2 0h12l4 4v16H2z" fill="#eee" stroke="#888" stroke-width=".8"/><path d="M11 8h6M11 11h6M11 14h6" stroke="#2b66c5" stroke-width="1.300"/><rect y="5" width="10" height="10" fill="#1c5ac7"/><path d="M2 7.500l1.500 5.500L5 8.500 6.500 13 8 7.500" fill="none" stroke="#fff" stroke-width="1.300"/></svg>
  <span class="ml-[17px] w-[200px]"><span data-w="146">database-re (1).docx</span></span>
  <svg class="w-[12px] h-[8px]" viewBox="0 0 12 8"><path d="M1 7.500L6 1.500l5 6" fill="none" stroke="#c4c7c9" stroke-width="1.700"/></svg>
  <div class="w-px h-[55px] ml-[22px] bg-[#65676a]"></div>
  <svg class="w-[18px] h-[20px] ml-[21px]" viewBox="0 0 18 20"><path d="M0 0h18v20H0z" fill="#fff"/><path d="M0 0h9v5H0z" fill="#f2d45a"/><circle cx="9" cy="8.500" r="6.500" fill="#111"/><circle cx="9" cy="8.500" r="3" fill="none" stroke="#2a4b7c"/><path d="M5 19l2-4h5l2 4z" fill="#254f74"/></svg>
  <span class="ml-[18px] w-[200px]"><span data-w="52">NOS.c3</span></span>
  <svg class="w-[12px] h-[8px] ml-[-1px]" viewBox="0 0 12 8"><path d="M1 7.500L6 1.500l5 6" fill="none" stroke="#c4c7c9" stroke-width="1.700"/></svg>
  <div class="w-[2px] h-[55px] ml-[22px] bg-[#77797c]"></div>
  <div class="ml-auto w-[97px] h-[39px] rounded-[4px] border border-[#3f4044] bg-[#292a2d] text-[#8ab4f8] text-[15px] font-semibold leading-[36px] text-center"><span data-w="57">Show all</span></div>
  <svg class="size-[12px] ml-[16px] mr-[17px] text-[#c4c7c9]" viewBox="0 0 20 20"><path d="M2 2l16 16M18 2L2 18" stroke="currentColor" stroke-width="3.600"/></svg>
</div>

<!-- Taskbar -->
<footer class="h-[50px] shrink-0 bg-[#1f2023] flex text-white">
  <div class="w-[60px] bg-[#1b232e] flex items-center justify-center"><svg class="size-[20px]"><use href="#win"/></svg></div>
  <div class="w-[430px] bg-[#333] border border-[#5b5b5b] flex items-center text-[18px] text-[#d6d6d6]">
    <svg class="size-[21px] ml-[14px]" viewBox="0 0 21 21"><circle cx="13" cy="8" r="7" fill="none" stroke="#eee" stroke-width="1.500"/><path d="M8 13L1 20" stroke="#eee" stroke-width="1.500"/></svg>
    <span class="ml-[14px]"><span data-w="164">Type here to search</span></span>
  </div>
  <div class="w-[60px] flex items-center justify-center"><div class="size-[19px] rounded-full border-[2.500px] border-white"></div></div>
  <div class="w-[68px] flex items-center justify-center"><svg class="size-[20px] mr-[8px]"><use href="#taskview"/></svg></div>
  <div class="flex gap-[11px]">
    <div class="w-[51px] flex items-center justify-center border-b-[3px] border-[#7fe3e6]"><svg class="size-[30px] mt-[3px]" viewBox="0 0 30 30"><path d="M0 0h30v30H0z" fill="#24a5d6"/><path d="M8 4h6v16h9v6H7z" fill="#123a6b"/><path d="M11 4h5v15h9v5H11z" fill="#fff"/></svg></div>
    <div class="w-[51px] flex items-center justify-center border-b-[3px] border-[#7fe3e6]"><svg class="size-[30px] mt-[3px]" viewBox="0 0 30 30"><path d="M0 15C0-5 30-5 30 12c0 6-6 8-12 6 4-3 0-9-6-9-8 0-10 6-12 6z" fill="#31b9dd"/><path d="M15 0c10 0 15 6 15 12 0 6-6 8-12 6 5-3 2-12-8-14z" fill="#5fd36e" fill-opacity=".7"/><path d="M0 14c2-8 14-8 16-3-5 2-6 13 6 17C10 33 0 25 0 14z" fill="#0f7bd0"/><path d="M14 12c-7 8 2 16 14 11-3 5-9 7-13 7C5 27 6 14 14 12z" fill="#124b9c"/></svg></div>
    <div class="w-[51px] flex items-center justify-center border-b-[3px] border-[#7fe3e6]"><svg class="w-[28px] h-[24px] mt-[3px]" viewBox="0 0 28 24"><path d="M0 0h11l3 4H0z" fill="#e19a15"/><path d="M0 4h28v20H0z" fill="#fbd268"/><path d="M5 24v-9q0-2 2-2h14q2 0 2 2v9h-5v-5h-8v5z" fill="#3b92dc"/></svg></div>
    <div class="w-[51px] flex items-center justify-center"><svg class="size-[30px]" viewBox="0 0 30 30"><path d="M15 1c11 0 14 3 14 12s-3 12-13 12l-5 5v-5C3 24 1 21 1 13 1 4 4 1 15 1z" fill="#7360f2" stroke="#fff" stroke-width="2"/><path d="M9 7l3 4-1.500 2q1.500 4 5 5.500l2-1.500 3.500 3-2 2.500Q8 20 7 9z" fill="#fff"/><path d="M16 6q7 1 7 8M16 9q4 .5 4 5" stroke="#fff" stroke-width="1.300" fill="none"/></svg></div>
    <div class="w-[61px] -mx-[5px] flex items-center justify-center bg-[#4e4f51] border-b-[3px] border-[#7fe3e6]"><svg class="size-[30px] mt-[3px]"><use href="#chrome"/></svg></div>
    <div class="w-[51px] flex items-center justify-center"><svg class="size-[29px]" viewBox="0 0 29 29"><ellipse cx="14.500" cy="14.500" rx="14" ry="14" fill="#e8152b"/><path d="M20 2q9 4 9 12.500T20 27q4-4 4-12.500T20 2z" fill="#a80f1e"/><ellipse cx="14.500" cy="14.500" rx="6" ry="10" fill="#1f2023"/></svg></div>
    <div class="w-[51px] flex items-center justify-center border-b-[3px] border-[#7fe3e6]"><svg class="size-[28px] mt-[3px]" viewBox="0 0 28 28"><path d="M0 0h28v28H0z" fill="#2fa4ee"/><path d="M0 18L8 10l15 18H0z" fill="#153566"/><path d="M12 15l6-3 10 12v4h-5z" fill="#2359a4"/><circle cx="18.500" cy="6.500" r="2.700" fill="#fff"/></svg></div>
    <div class="w-[51px] flex items-center justify-center border-b-[3px] border-[#7fe3e6]"><svg class="size-[30px] mt-[3px]" viewBox="0 0 30 30"><path d="M7 5Q5 2 12 2q14-1 14 10 0 8-7 11" fill="none" stroke="#d2451b" stroke-width="3"/><path d="M10 3q-6 9-1 14" fill="none" stroke="#d2451b" stroke-width="2"/><path d="M13 1l5 21M23 11L10 20" stroke="#cfcfcf" stroke-width="3"/><circle cx="6" cy="22" r="3.500" fill="none" stroke="#1b76c2" stroke-width="2.600"/><circle cx="18" cy="25.500" r="3.500" fill="none" stroke="#27a3e8" stroke-width="2.600"/></svg></div>
    <div class="w-[51px] flex items-center justify-center border-b-[3px] border-[#7fe3e6]"><svg class="w-[30px] h-[26px] mt-[3px]" viewBox="0 0 30 26"><path d="M7 0h23v7H7z" fill="#41a5ee"/><path d="M7 7h23v6H7z" fill="#2b7cd3"/><path d="M7 13h23v6H7z" fill="#185abd"/><path d="M7 19h23v7H7z" fill="#103f91"/><rect y="5" width="16" height="16" rx="1" fill="#185abd"/><path d="M3 9l2.500 8L8 10l2.500 7L13 9" fill="none" stroke="#fff" stroke-width="1.900"/></svg></div>
    <div class="w-[51px] flex items-center justify-center bg-[#39393b] border-b-[3px] border-[#fdf001] shadow-[inset_5px_0_0_#79722a]"><svg class="w-[26px] h-[23px] mt-[3px]" viewBox="0 0 26 23"><path d="M0 1l16 10.500L0 22z" fill="#6826c9"/><path d="M26 0v23L12 12z" fill="#cdbdf5"/><path d="M10 7l6 4.500L10 16z" fill="#4b1b9e"/></svg></div>
  </div>
  <div class="ml-auto flex items-center text-[14.500px]">
    <div class="w-[62px] h-[25px] border-[3px] border-white bg-black flex items-center"><div class="w-[45px] h-full bg-[#149b48] text-[17px] leading-[19px] pl-[11px]"><span data-w="34">76%</span></div></div>
    <div class="w-[2px] h-[12px] bg-white"></div>
    <svg class="w-[12px] h-[19px] ml-[8px]" viewBox="0 0 12 19"><path d="M1 6h10v4q0 4-4 4.500V19H5v-4.500Q1 14 1 10zM2 0h2.500v6H2zM7.500 0H10v6H7.500z" fill="#fff"/></svg>
    <svg class="w-[16px] h-[9px] ml-[13px]" viewBox="0 0 16 9"><path d="M1 8.500L8 1.500l7 7" fill="none" stroke="#fff" stroke-width="1.400"/></svg>
    <svg class="w-[20px] h-[14px] ml-[12px]"><use href="#batt"/></svg>
    <svg class="w-[22px] h-[18px] ml-[9px]"><use href="#speaker"/></svg>
    <svg class="w-[17px] h-[17px] ml-[11px]"><use href="#wifi"/></svg>
    <span class="ml-[15px] w-[45px]"><span data-w="28">ENG</span></span>
    <div class="w-[76px] text-center leading-[23px]"><span data-w="34">15:35</span><br><span data-w="76">11-12-2020</span></div>
    <svg class="size-[21px] ml-[23px]"><use href="#note"/></svg>
    <div class="w-px h-[50px] ml-[23px] mr-[5px] bg-[#666]"></div>
  </div>
</footer>

<script>
const tabs = [['globe','A s'],['globe','FM'],['classgreen','Cou'],['classgreen','Cou'],['drive','Dat'],['drive','Dat'],['flow','dfs'],['classroom','Ne','#e8710a'],['drive','Lec'],['yt','(5)'],['classroom','Ne','#e8710a'],['classroom','CC','#12a4b6'],['drive','We'],['gmail','Inb'],['drive','Wo'],['docs','Wo'],['docs','CS'],['yahoo','ital'],['shield','BIT'],['fb','(2)'],['globe','htt'],null,['w3','SQ'],['globe','htt']];
document.getElementById('tabs').innerHTML = tabs.map((t, i) => {
  if (!t) return `<div class="w-[67.900px] shrink-0 h-[42px] bg-[#35363a] rounded-t-[8px] flex items-center pl-[9px]">
    <span class="w-[4px] overflow-hidden text-white">M</span>
    <svg class="size-[16px] ml-[7px] shrink-0" viewBox="0 0 16 16"><circle cx="8" cy="8" r="7.300" fill="none" stroke="#bdc1c6" stroke-width="1.200"/><circle cx="8" cy="8" r="5.200" fill="#bdc1c6"/></svg>
    <svg class="size-[12px] ml-[7px] text-white shrink-0"><use href="#x"/></svg></div>`;
  const line = i === 20 ? 'border-transparent' : 'border-[#5a5c60]';
  return `<div class="w-[67.900px] shrink-0 h-[25px] mt-[9px] border-r ${line} flex items-center pl-[8.500px]">
    <svg class="size-[20px] shrink-0" style="color:${t[2] || '#fff'}"><use href="#${t[0]}"/></svg>
    <span class="ml-[10px] w-[21px] tracking-[-0.400px] bg-linear-to-r from-[#c4c7cb] from-60% to-transparent bg-clip-text text-transparent">${t[1]}</span></div>`;
}).join('');

// Entity tables: title, left, top, width, key column width, primary key, fields, row that carries FK, bold key
const tables = [
  ['Classroom',145.5,336.5,90,17,'number',['name','floor','building'],-1,1],
  ['Module',341.5,308.5,90,17,'id',['name','duration','instructor','specification_id'],3,1],
  ['Instructor',128.5,454.5,84.500,17,'id',['name','address_id','phone','email','salary'],1,1],
  ['Specification',325,462.5,89.500,17,'id',['name','years','course_id','total_module'],2,1],
  ['Address',.5,543.5,89,16,'id',['country','province','city','street','house_number','phone_numbers','fax_numbers'],-1,1],
  ['Student',123.5,639.5,89.500,17,'id',['name','address_id','phone','email','enrolled_date','marks_obtained'],1,0],
  ['Course',336.5,633.5,89.500,17,'id',['name','fee','leader_id'],2,0]];
const widths = {number:24.5,id:6,name:17,floor:13,building:23,duration:24,instructor:28,specification_id:46,address_id:33,phone:18.500,email:16,salary:17.500,years:16,course_id:29,total_module:38,country:22,province:25.500,city:10,street:17,house_number:45,phone_numbers:48.500,fax_numbers:39,enrolled_date:41,marks_obtained:48,fee:9.500,leader_id:28};
const titleW = {Classroom:37.5,Module:26,Instructor:33.5,Specification:44,Address:29,Student:27,Course:25};
let s = '<g fill="none" stroke="#333">';
['M235.500 359.500H274.800V319.700H341','M341 331.300H308.200V482.300H213','M431.500 391.300H459.400V485.700H414.600','M414.600 530.300H453.500V656.300H426','M213 493.500H297.200V701.300H336.500','M128.500 507.500H106.500V567H89.500','M89.500 573.500H106.500V692.500H123.500','M213 750.500H269V656.300H336.500',
 'M238 357v5M341 317l-4 2.700 4 2.700M337 317v5M341 329l-4 2.300 4 2.300M431.500 389l4 2.300-4 2.300M436 389v5M414.600 483.500l4 2.300-4 2.300M414.600 528l4 2.300-4 2.300M428 654v5M213 480l4 2.300-4 2.300M215.500 491v5M334 699v5M334 654v5M128.500 505l-4 2.500 4 2.500M92 564.500v5M92 571v5M123.500 690l-4 2.500 4 2.500M213 748l4 2.500-4 2.500M217 748v5'
].forEach(d => s += `<path d="${d}" stroke-width=".9"/>`);
s += '</g>';
[[335,331.3],[422,485.7],[422,530.3],[220,482.3],[121.5,507.5],[116.5,692.5]].forEach(c => s += `<circle cx="${c[0]}" cy="${c[1]}" r="2" fill="#fdfcfe" stroke="#333" stroke-width=".8"/>`);
tables.forEach(([t,x,y,w,k,pk,f,fk,b]) => {
  const h = 32 + f.length * 14.6;
  s += `<path d="M${x} ${y}h${w}v${h}h${-w}zM${x} ${y+15}h${w}M${x} ${y+32}h${w}M${x+k} ${y+15}v${h-15}" fill="none" stroke="#333"/>`;
  s += `<text x="${x+w/2-titleW[t]/2}" y="${y+10.4}" font-size="8.500" textLength="${titleW[t]}">${t}</text>`;
  s += `<text x="${x+3}" y="${y+25.5}" textLength="9.500">PK</text><text x="${x+k+3}" y="${y+25.5}" ${b?'font-weight="700"':''} textLength="${widths[pk]}">${pk}</text>`;
  f.forEach((n,i) => {
    const ty = y + 41.3 + i * 14.6;
    if (i === fk) s += `<text x="${x+3}" y="${ty}" textLength="9">FK</text>`;
    s += `<text x="${x+k+3}" y="${ty}" textLength="${widths[n]}">${n}</text>`;
  });
});
s += '<path d="M233.500 570v9l2.200-2 1.800 3.500 1.500-.7-1.700-3.300h2.500z" fill="#fff" stroke="#444" stroke-width=".8"/>';
document.getElementById('erd').innerHTML = s;

// Tracks each label to its set width, once the styles and fonts are in force
function track() {
  const labels = [...document.querySelectorAll('[data-w]')];
  labels.forEach(e => { e.style.letterSpacing = '0px'; });
  labels.forEach(e => {
    const r = document.createRange();
    r.selectNodeContents(e);
    const gap = (e.dataset.w - r.getBoundingClientRect().width) / e.textContent.length;
    e.style.letterSpacing = Math.max(-1.2, Math.min(1.2, gap)) + 'px';
  });
}
track();
window.addEventListener('load', () => { track(); requestAnimationFrame(track); setTimeout(track, 60); });
document.fonts.ready.then(track);
new MutationObserver(track).observe(document.head, {childList: true, subtree: true});
</script>
</body>
</html>
